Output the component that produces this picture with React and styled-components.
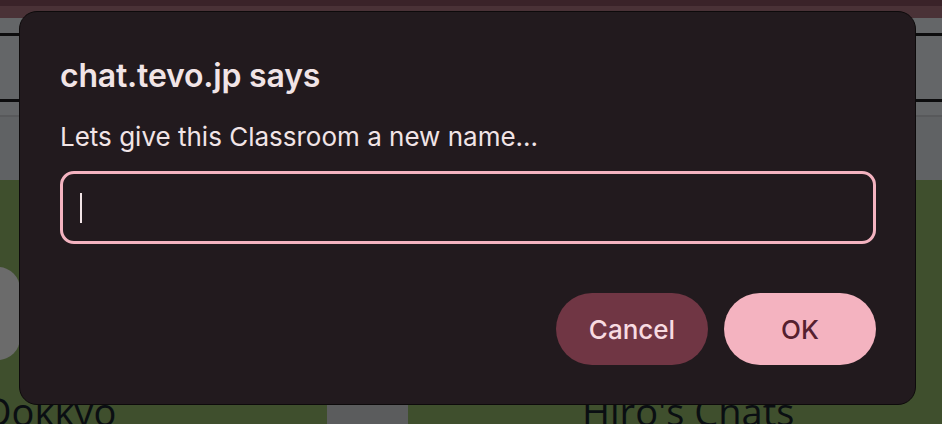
import React from 'react';
import styled, { createGlobalStyle } from 'styled-components';

const GlobalStyle = createGlobalStyle`
    html, body {
        margin: 0;
        padding: 0;
        width: 942px;
        height: 424px;
        overflow: hidden;
        background: #3f4f2d;
    }
    * {
        box-sizing: border-box;
    }
`;

const Page = styled.div`
    position: relative;
    width: 942px;
    height: 424px;
    overflow: hidden;
    font-family: Inter, "Noto Sans", sans-serif;
`;

// page behind the dialog
const TopStrip = styled.div`
    height: 18px;
    background: linear-gradient(#3a2329 0 6px, #4a3237 6px 18px);
`;

const Toolbar = styled.div`
    height: 162px;
    display: flex;
    flex-direction: column;
    background: #646668;
    .gap-a {
        height: 15px;
    }
    .rule {
        height: 3px;
        background: #0c0c0d;
    }
    .gap-b {
        height: 63px;
    }
    .thin {
        height: 2px;
        background: #58595b;
        margin-top: 13px;
    }
    .rest {
        flex: 1;
        background: #606264;
    }
`;

const Board = styled.div`
    height: 244px;
    background: #3f4f2d;
    display: grid;
    grid-template-columns: 327px 81px 1fr;
    grid-template-rows: 87px 93px 1fr;
`;

const SideCard = styled.div`
    grid-column: 1;
    grid-row: 2;
    width: 22px;
    margin-left: -2px;
    background: #6b6b6b;
    border-radius: 0 22px 22px 0;
`;

const Label = styled.div`
    grid-row: 3;
    grid-column: ${p => p.col};
    align-self: start;
    margin-top: 32px;
    margin-left: ${p => p.offset}px;
    font-family: "Open Sans", "Noto Sans", sans-serif;
    font-size: 38px;
    line-height: 38px;
    font-weight: 500;
    color: #0a0e12;
    white-space: nowrap;
`;

const GrayBlock = styled.div`
    grid-row: 3;
    grid-column: 2;
    margin-top: 35px;
    background: #5b5c5d;
`;

// dialog
const Dialog = styled.div`
    position: absolute;
    left: 19px;
    top: 11px;
    width: 897px;
    height: 394px;
    background: #221a1e;
    border: 1px solid #0d0a0b;
    border-radius: 18px;
    padding: 36px 39px 39px 40px;
    display: flex;
    flex-direction: column;
`;

const Title = styled.h1`
    margin: 0;
    font-size: 32px;
    font-weight: 600;
    line-height: 56px;
    color: #f1e4e6;
    letter-spacing: -0.2px;
`;

const Message = styled.p`
    margin: 16px 0 0;
    font-size: 26px;
    font-weight: 400;
    line-height: 34px;
    color: #f1e4e6;
`;

const Field = styled.div`
    margin-top: 17px;
    height: 73px;
    border: 3px solid #f4b3c0;
    border-radius: 14px;
    display: flex;
    align-items: center;
    padding-left: 17px;
    .caret {
        width: 2px;
        height: 30px;
        background: #f1e4e6;
    }
`;

const Actions = styled.div`
    margin-top: auto;
    display: flex;
    justify-content: flex-end;
    gap: 16px;
`;

const Button = styled.button`
    width: 152px;
    height: 72px;
    border: none;
    border-radius: 36px;
    font-family: Inter, "Noto Sans", sans-serif;
    font-size: 26px;
    font-weight: 500;
    background: ${p => (p.primary ? '#f4b3c0' : '#703644')};
    color: ${p => (p.primary ? '#55202f' : '#f8dbe1')};
    padding: 0;
`;

const App = () => {
    return (
        <Page>
            <GlobalStyle />
            <TopStrip />
            <Toolbar>
                <div className="gap-a" />
                <div className="rule" />
                <div className="gap-b" />
                <div className="rule" />
                <div className="thin" />
                <div className="rest" />
            </Toolbar>
            <Board>
                <SideCard />
                <Label col={1} offset={-16}>Dokkyo</Label>
                <GrayBlock />
                <Label col={3} offset={174}>Hiro's Chats</Label>
            </Board>
            <Dialog>
                <Title>chat.tevo.jp says</Title>
                <Message>Lets give this Classroom a new name...</Message>
                <Field>
                    <div className="caret" />
                </Field>
                <Actions>
                    <Button>Cancel</Button>
                    <Button primary>OK</Button>
                </Actions>
            </Dialog>
        </Page>
    );
};

export default App;
